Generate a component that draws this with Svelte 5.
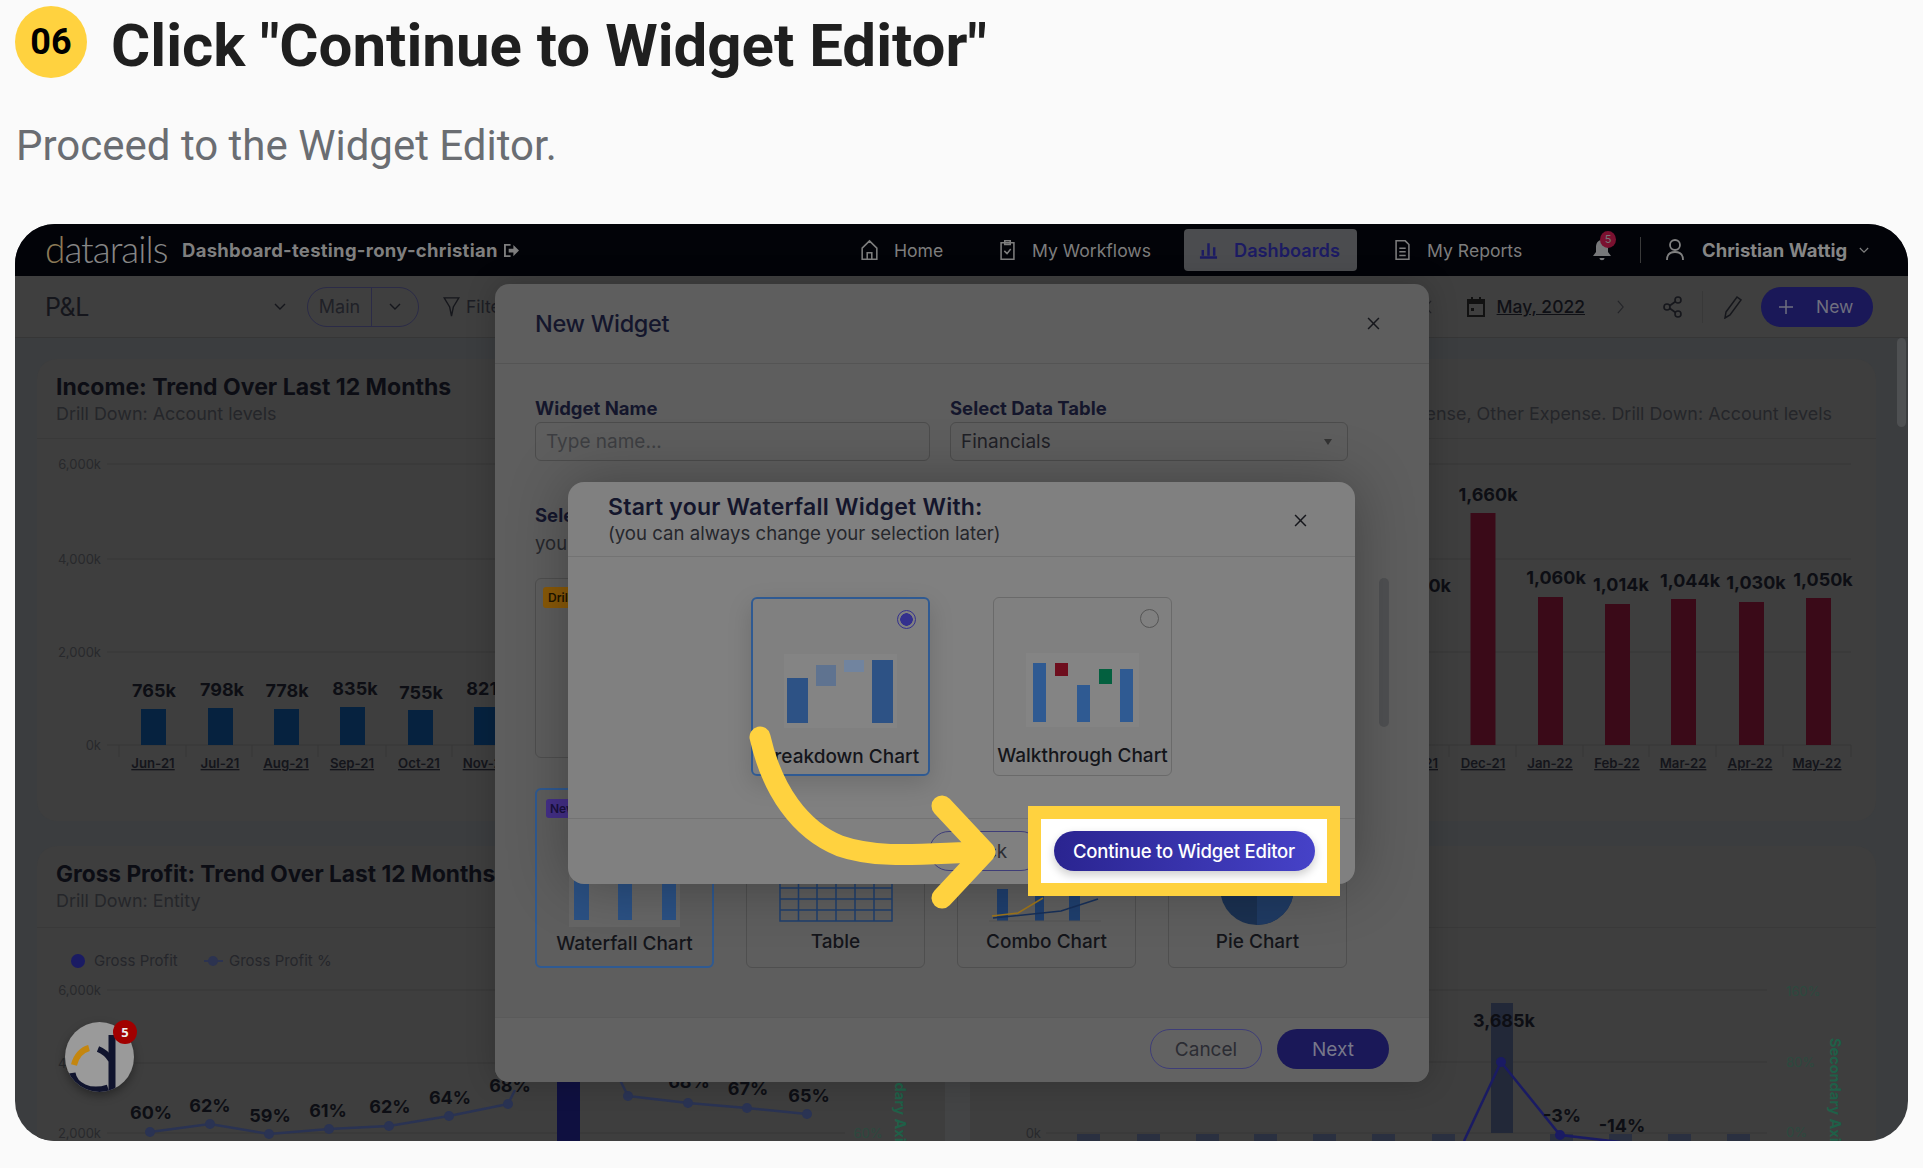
<script>
  const bars1 = [[141,709],[208,708],[274,709],[340,707],[408,710],[474,707]];
  const vals1 = [[154,690,'765k'],[222,689,'798k'],[287,690,'778k'],[355,688,'835k'],[421,692,'755k'],[487,688,'821k']];
  const months1 = [[153,'Jun-21'],[220,'Jul-21'],[286,'Aug-21'],[352,'Sep-21'],[419,'Oct-21'],[485,'Nov-21']];
  const bars2 = [[1470.5,513],[1538,597],[1605,604],[1671,599],[1739,602],[1806,598]];
  const vals2 = [[1488,495,'1,660k'],[1556,578,'1,060k'],[1621,585,'1,014k'],[1690,581,'1,044k'],[1756,583,'1,030k'],[1823,580,'1,050k']];
  const months2 = [[1483,'Dec-21'],[1550,'Jan-22'],[1617,'Feb-22'],[1683,'Mar-22'],[1750,'Apr-22'],[1817,'May-22']];
  const ticks = [119,186,252,318,386,452,1449,1516,1583,1649,1716,1783,1851];
  const pts1 = [[150,1132],[210,1124],[269,1134],[329,1129],[389,1126],[449,1116],[508,1104]];
  const pts2 = [[628,1096],[688,1103],[747,1108],[807,1114]];
  const pct1 = [[151,1113,'60%'],[210,1106,'62%'],[270,1116,'59%'],[328,1111,'61%'],[390,1107,'62%'],[450,1098,'64%'],[510,1086,'68%'],[689,1082,'68%'],[748,1089,'67%'],[809,1096,'65%']];
  const lowBars = [1077,1137,1196,1254,1313,1372,1432,1550,1609,1668,1727];
  const line = (p) => p.map((q) => q.join(',')).join(' ');
</script>

<div class="page">
  <header class="step">
    <span class="num">06</span>
    <h1>Click "Continue to Widget Editor"</h1>
  </header>
  <p class="lead">Proceed to the Widget Editor.</p>

  <section class="shot">
    <div class="topbar">
      <span class="logo"><span class="logo-d">d</span>atarails</span>
      <span class="wsname">Dashboard-testing-rony-christian</span>
      <svg class="wsicon" viewBox="0 0 18 16"><path d="M8 2H2v12h6" fill="none" stroke="#7d7d7d" stroke-width="2"/><path d="M6 6h5V2l6 6-6 6v-4H6z" fill="#7d7d7d"/></svg>
      <nav class="nav">
        <a class="navitem home">
          <svg viewBox="0 0 20 24" class="ic"><path d="M2 10l8-8 8 8v12H2zM7.500 22v-7h5v7" fill="none" stroke="#7d7d7d" stroke-width="1.700"/></svg>Home
        </a>
        <a class="navitem flows">
          <svg viewBox="0 0 20 24" class="ic"><path d="M3 4h14v18H3zM7 2h6v4H7zM6.500 13l3 3 4-5" fill="none" stroke="#7d7d7d" stroke-width="1.700"/></svg>My Workflows
        </a>
        <a class="navitem active">
          <svg viewBox="0 0 20 20" class="ic small"><path d="M1 18h18M4 10v6M10 3v13M16 7v9" fill="none" stroke="#1c1b63" stroke-width="2.600"/></svg>Dashboards
        </a>
        <a class="navitem reports">
          <svg viewBox="0 0 20 24" class="ic"><path d="M3 2h10l4 4v16H3zM6.500 10h7M6.500 14h7M6.500 18h7" fill="none" stroke="#7d7d7d" stroke-width="1.700"/></svg>My Reports
        </a>
      </nav>
      <span class="bell">
        <svg viewBox="0 0 20 22"><path d="M10 1c4 0 6 3 6 7v5l3 4H1l3-4V8c0-4 2-7 6-7zM7.500 19h5c0 3-5 3-5 0z" fill="#77787a"/></svg>
        <b>5</b>
      </span>
      <i class="vr"></i>
      <svg class="user" viewBox="0 0 20 24"><circle cx="10" cy="7" r="5" fill="none" stroke="#808080" stroke-width="1.800"/><path d="M2 22c0-6 3-8 8-8s8 2 8 8" fill="none" stroke="#808080" stroke-width="1.800"/></svg>
      <span class="uname">Christian Wattig</span>
      <svg class="chev-u" viewBox="0 0 12 8"><path d="M1 1l5 5 5-5" fill="none" stroke="#808080" stroke-width="1.400"/></svg>
    </div>

    <div class="toolbar">
      <span class="pl">P&amp;L</span>
      <svg class="chev pl-chev" viewBox="0 0 12 8"><path d="M1 1l5 5 5-5" fill="none" stroke="#15161c" stroke-width="1.400"/></svg>
      <span class="mainpill"><span>Main</span><i><svg class="chev" viewBox="0 0 12 8"><path d="M1 1l5 5 5-5" fill="none" stroke="#15161c" stroke-width="1.400"/></svg></i></span>
      <svg class="filter" viewBox="0 0 18 24"><path d="M1 2h16L11 12l-2 10-2-10z" fill="none" stroke="#16171c" stroke-width="1.500"/></svg>
      <span class="filt">Filters</span>
      <span class="spring"></span>
      <svg class="prev" viewBox="0 0 10 16"><path d="M8 1L2 8l6 7" fill="none" stroke="#232428" stroke-width="1.300"/></svg>
      <svg class="cal" viewBox="0 0 20 22"><path d="M2 4h16v16H2zM6 1v5M14 1v5" fill="none" stroke="#111" stroke-width="2"/><path d="M2 4h16v4H2z" fill="#111"/><rect x="5" y="12" width="3" height="3" fill="#111"/></svg>
      <span class="date">May, 2022</span>
      <svg class="next" viewBox="0 0 10 16"><path d="M2 1l6 7-6 7" fill="none" stroke="#232428" stroke-width="1.300"/></svg>
      <svg class="share" viewBox="0 0 20 22"><g fill="none" stroke="#16171c" stroke-width="1.600"><circle cx="15" cy="4" r="3"/><circle cx="15" cy="18" r="3"/><circle cx="4" cy="11" r="3"/><path d="M7 9.500l5.500-4M7 12.500l5.500 4"/></g></svg>
      <i class="vr dark"></i>
      <svg class="pencil" viewBox="0 0 20 24"><path d="M3 17L14 2l4 3L7 20l-5 3z" fill="none" stroke="#16171c" stroke-width="1.500"/></svg>
      <span class="newbtn"><svg viewBox="0 0 16 16"><path d="M8 1v14M1 8h14" stroke="#6f6f7f" stroke-width="1.500"/></svg><span>New</span></span>
    </div>

    <div class="cards">
      <article class="card first">
        <div class="card-head">
          <div>
            <h2>Income: Trend Over Last 12 Months</h2>
            <p>Drill Down: Account levels</p>
          </div>
          <p class="rightsub">Expense, Other Expense. Drill Down: Account levels</p>
        </div>
        <svg class="chart c1" viewBox="37 439 1839 382">
          {#each [[464,'6,000k'],[559,'4,000k'],[652,'2,000k'],[745,'0k']] as g}
            <line x1="107" x2="1851" y1={g[0]} y2={g[0]} class="gl"/>
            <text x="101" y={g[0]+5} text-anchor="end" class="ylab">{g[1]}</text>
          {/each}
          {#each ticks as t}<line x1={t} x2={t} y1="745" y2="757" class="gl"/>{/each}
          {#each bars1 as b}<rect x={b[0]} y={b[1]} width="25" height={745-b[1]} fill="#06223f"/>{/each}
          {#each vals1 as v}<text x={v[0]} y={v[1]+7} text-anchor="middle" class="val">{v[2]}</text>{/each}
          {#each months1 as m}<text x={m[0]} y="768" text-anchor="middle" class="mon">{m[1]}</text>{/each}
          <rect x="1404" y="560" width="25" height="185" fill="#3a0a18"/>
          <text x="1451" y="592" text-anchor="end" class="val">1,000k</text>
          <text x="1438" y="768" text-anchor="end" class="mon">Nov-21</text>
          {#each bars2 as b}<rect x={b[0]} y={b[1]} width="25" height={745-b[1]} fill="#3a0a18"/>{/each}
          {#each vals2 as v}<text x={v[0]} y={v[1]+6} text-anchor="middle" class="val">{v[2]}</text>{/each}
          {#each months2 as m}<text x={m[0]} y="768" text-anchor="middle" class="mon">{m[1]}</text>{/each}
        </svg>
      </article>

      <article class="card second">
        <div class="card-head">
          <div>
            <h2>Gross Profit: Trend Over Last 12 Months</h2>
            <p>Drill Down: Entity</p>
          </div>
        </div>
        <svg class="chart c2" viewBox="37 928 1839 213">
          <circle cx="78" cy="961" r="7" fill="#1a1b63"/>
          <text x="94" y="966" class="leg">Gross Profit</text>
          <line x1="204" x2="223" y1="961" y2="961" stroke="#2c3350" stroke-width="2"/>
          <circle cx="213" cy="961" r="5" fill="#2c3350"/>
          <text x="229" y="966" class="leg">Gross Profit %</text>
          {#each [[990,'6,000k'],[1063,'4,000k'],[1133,'2,000k']] as g}
            <line x1="107" x2="845" y1={g[0]} y2={g[0]} class="gl"/>
            <text x="101" y={g[0]+5} text-anchor="end" class="ylab">{g[1]}</text>
          {/each}
          <rect x="945" y="928" width="25" height="213" fill="#434445"/>
          <rect x="557" y="1060" width="23" height="90" fill="#0f1040"/>
          <polyline points={line(pts1)} class="pl1"/>
          <polyline points={line(pts2)} class="pl1"/>
          <polyline points="508,1104 515,1090" class="pl1"/>
          <polyline points="628,1096 620,1080" class="pl1"/>
          {#each [...pts1, ...pts2] as p}<circle cx={p[0]} cy={p[1]} r="5" fill="#2a3353"/>{/each}
          {#each pct1 as v}<text x={v[0]} y={v[1]+6} text-anchor="middle" class="val">{v[2]}</text>{/each}
          <text x="868" y="1138" class="green" text-anchor="middle">60%</text>
          <text x="0" y="0" class="axis" transform="translate(895 1038) rotate(90)">Secondary Axis</text>

          <line x1="1046" x2="1767" y1="1133" y2="1133" class="gl"/>
          <line x1="1046" x2="1767" y1="990" y2="990" class="gl"/>
          <line x1="1046" x2="1767" y1="1062" y2="1062" class="gl"/>
          <text x="1041" y="1138" text-anchor="end" class="ylab">0k</text>
          {#each lowBars as x}<rect x={x} y="1134" width="23" height="7" fill="#2a3040"/>{/each}
          <rect x="1491" y="1003" width="22" height="130" fill="#222838"/>
          <polyline points="1464,1141 1501,1062 1560,1135 1620,1142" fill="none" stroke="#1a1b63" stroke-width="2.500"/>
          <circle cx="1501" cy="1062" r="5" fill="#1a1b63"/>
          <circle cx="1560" cy="1135" r="5" fill="#1a1b63"/>
          <text x="1504" y="1027" text-anchor="middle" class="val">3,685k</text>
          <text x="1562" y="1122" text-anchor="middle" class="val">-3%</text>
          <text x="1622" y="1132" text-anchor="middle" class="val">-14%</text>
          <text x="1786" y="996" class="green">160%</text>
          <text x="1786" y="1067" class="green">80%</text>
          <text x="1786" y="1137" class="green">0%</text>
          <text x="0" y="0" class="axis" transform="translate(1830 1038) rotate(90)">Secondary Axis</text>
        </svg>
      </article>
    </div>
    <span class="pagebar"></span>

    <button class="avatar" aria-label="Datarails helper">
      <svg viewBox="65 1022 69 70">
        <path d="M74 1065C76 1056 82 1050 89 1048" fill="none" stroke="#c4860f" stroke-width="6"/>
        <path d="M72 1073C74 1086 90 1094 108 1088" fill="none" stroke="#10142e" stroke-width="7"/>
        <path d="M98 1049C103 1051 108 1055 111 1060" fill="none" stroke="#10142e" stroke-width="6"/>
        <path d="M112 1035v57" stroke="#10142e" stroke-width="7"/>
      </svg>
      <b>5</b>
    </button>

    <div class="modal">
      <div class="m-head"><h3>New Widget</h3><svg class="x" viewBox="0 0 12 12"><path d="M1 1l10 10M11 1L1 11" stroke="#16171c" stroke-width="1.400"/></svg></div>
      <div class="m-body">
        <div class="fields">
          <label>Widget Name<span class="inp ph">Type name...</span></label>
          <label>Select Data Table<span class="inp">Financials<i class="caret"></i></span></label>
        </div>
        <h4>Select Widget Type</h4>
        <p class="you">you can choose one of the following</p>
        <div class="bigbox"><span class="drill">Drill</span></div>
        <div class="types">
          <div class="type on">
            <span class="newtag">New</span>
            <svg viewBox="0 0 179 142"><rect x="34" y="70" width="111" height="67" fill="#666"/><rect x="39" y="90" width="15" height="40" fill="#2b5184"/><rect x="83" y="90" width="14" height="40" fill="#2b5184"/><rect x="127" y="90" width="14" height="40" fill="#2b5184"/></svg>
            <span class="lab">Waterfall Chart</span>
          </div>
          <div class="type">
            <svg viewBox="0 0 179 142"><g stroke="#1f3f6e" stroke-width="1.500" fill="none"><rect x="34" y="90" width="112" height="42"/><path d="M34 99h112M34 110h112M34 121h112M52.500 90v42M71 90v42M90 90v42M109 90v42M128 90v42"/></g></svg>
            <span class="lab">Table</span>
          </div>
          <div class="type">
            <svg viewBox="0 0 179 142"><rect x="40" y="100" width="11" height="32" fill="#1f3f6e"/><rect x="78" y="100" width="9" height="32" fill="#1f3f6e"/><rect x="112" y="100" width="11" height="32" fill="#1f3f6e"/><path d="M35 127l26-3 25-15" fill="none" stroke="#a0761a" stroke-width="1.500"/><path d="M36 129l68-7 37-12" fill="none" stroke="#17305a" stroke-width="1.500"/><path d="M32 132h112" stroke="#555" stroke-width="1"/></svg>
            <span class="lab">Combo Chart</span>
          </div>
          <div class="type">
            <svg viewBox="0 0 179 142"><circle cx="89" cy="99" r="37" fill="#1a3050"/><path d="M89 99l37 0a37 37 0 0 1-37 37z" fill="#1f3a62"/></svg>
            <span class="lab">Pie Chart</span>
          </div>
        </div>
        <span class="m-scroll"></span>
      </div>
      <div class="m-foot">
        <span class="btn ghost">Cancel</span>
        <span class="btn solid">Next</span>
      </div>
    </div>

    <div class="dialog">
      <div class="d-head">
        <div>
          <h3>Start your Waterfall Widget With:</h3>
          <p>(you can always change your selection later)</p>
        </div>
        <svg class="x" viewBox="0 0 12 12"><path d="M1 1l10 10M11 1L1 11" stroke="#16171c" stroke-width="1.400"/></svg>
      </div>
      <div class="d-body">
        <div class="opt sel">
          <span class="radio on"></span>
          <svg viewBox="0 0 179 120" class="optimg">
            <rect x="33" y="55" width="113" height="74" fill="#848484"/>
            <rect x="36" y="79" width="21" height="45" fill="#2d5285"/>
            <rect x="65" y="66" width="20" height="21" fill="#5f7390"/>
            <rect x="93" y="61" width="20" height="12" fill="#71849f"/>
            <rect x="121" y="61" width="21" height="63" fill="#2d5285"/>
          </svg>
          <span class="lab">Breakdown Chart</span>
        </div>
        <div class="opt">
          <span class="radio"></span>
          <svg viewBox="0 0 179 120" class="optimg">
            <rect x="33" y="55" width="113" height="74" fill="#848484"/>
            <rect x="40" y="65" width="13" height="59" fill="#2f5a92"/>
            <rect x="62" y="65" width="13" height="13" fill="#6e0e1e"/>
            <rect x="84" y="87" width="13" height="37" fill="#2f5a92"/>
            <rect x="106" y="71" width="13" height="15" fill="#03603f"/>
            <rect x="127" y="71" width="13" height="53" fill="#2f5a92"/>
          </svg>
          <span class="lab">Walkthrough Chart</span>
        </div>
      </div>
      <div class="d-foot"><span class="btn ghost back">Back</span></div>
    </div>

    <div class="spot"><span class="cta">Continue to Widget Editor</span></div>

    <svg class="arrow" viewBox="15 224 1893 917" aria-hidden="true">
      <path d="M760 737C772 790 800 830 840 846C880 860 930 853 984 852M942 806L985 852L942 898" fill="none" stroke="#ffd23f" stroke-width="21" stroke-linecap="round" stroke-linejoin="round"/>
    </svg>
  </section>
</div>

<style>
  :global(body) { margin: 0; background: #fafafa; }
  .page { height: 1168px; box-sizing: border-box; padding: 6px 15px 0; font-family: Inter, "Liberation Sans", sans-serif; overflow: hidden; }
  .step { display: flex; align-items: center; gap: 24px; height: 72px; }
  .num { width: 72px; height: 72px; border-radius: 50%; background: #ffd23f; color: #000; font: 700 36px Roboto, sans-serif; display: flex; align-items: center; justify-content: center; flex: none; }
  h1 { margin: 0; font: 700 60px Roboto, sans-serif; color: #1f1f1f; white-space: nowrap; position: relative; top: 3px; }
  .lead { margin: 43px 0 0 1px; font: 400 42px/50px Roboto, sans-serif; color: #6a6d72; height: 53px; }
  .shot { position: relative; margin-top: 50px; width: 1893px; height: 917px; border-radius: 40px; overflow: hidden; background: #3b3d3f; }

  .topbar { height: 52px; background: #020308; display: flex; align-items: center; padding-left: 30px; color: #7d7d7d; font-size: 17.600px; }
  .logo { font: 300 37px Lato, sans-serif; letter-spacing: -1px; color: #868686; width: 137px; position: relative; top: -2px; }
  .logo-d { color: #8c7a57; }
  .wsname { font-weight: 700; font-size: 18.500px; width: 321px; white-space: nowrap; color: #7f7f7f; letter-spacing: .27px; }
  .wsicon { width: 17px; height: 15px; }
  .nav { display: flex; align-items: center; margin-left: 340px; }
  .navitem { display: flex; align-items: center; gap: 15px; white-space: nowrap; }
  .ic { width: 19px; height: 22px; flex: none; }
  .ic.small { height: 20px; }
  .home { width: 138px; }
  .flows { width: 186px; }
  .active { width: 173px; height: 42px; background: #4b4c4f; border-radius: 4px; padding-left: 15px; box-sizing: border-box; gap: 16px; color: #1c1b63; font-weight: 600; font-size: 18.200px; }
  .reports { margin-left: 36px; width: 199px; }
  .bell { position: relative; width: 20px; height: 22px; }
  .bell svg { width: 20px; height: 22px; }
  .bell b { position: absolute; left: 8px; top: -8px; width: 16px; height: 17px; border-radius: 50%; background: #7a1130; color: #777; font: 400 11px/17px Inter, sans-serif; text-align: center; }
  .vr { width: 1px; height: 26px; background: #3a3a3a; margin-left: 28px; }
  .user { width: 20px; height: 24px; margin-left: 24px; }
  .uname { margin-left: 17px; font-weight: 700; font-size: 18.500px; white-space: nowrap; color: #868686; }
  .chev-u { width: 10px; height: 7px; margin-left: 12px; }

  .toolbar { height: 62px; background: #3f3f3f; border-bottom: 1px solid #363636; box-sizing: border-box; display: flex; align-items: center; padding-left: 30px; padding-right: 35px; color: #1c1d24; font-size: 17.500px; }
  .pl { font-size: 25px; color: #15161c; width: 229px; letter-spacing: -.5px; }
  .chev { width: 12px; height: 8px; }
  .pl-chev { flex: none; }
  .mainpill { margin-left: 21px; display: flex; align-items: center; height: 40px; width: 112px; border: 1px solid #2b2b47; border-radius: 20px; box-sizing: border-box; color: #202127; }
  .mainpill span { width: 63px; text-align: center; font-size: 18px; }
  .mainpill i { flex: 1; height: 100%; border-left: 1px solid #2b2b47; display: flex; align-items: center; justify-content: center; }
  .filter { width: 17px; height: 22px; margin-left: 24px; }
  .filt { margin-left: 6px; white-space: nowrap; }
  .spring { flex: 1; }
  .prev { width: 9px; height: 14px; margin-right: 33px; }
  .cal { width: 20px; height: 22px; }
  .date { margin-left: 11px; font-weight: 500; text-decoration: underline; color: #0f1015; white-space: nowrap; font-size: 17.500px; }
  .next { width: 9px; height: 14px; margin-left: 31px; }
  .share { width: 20px; height: 22px; margin-left: 38px; }
  .vr.dark { height: 32px; background: #383838; margin-left: 19px; }
  .pencil { width: 20px; height: 24px; margin-left: 20px; }
  .newbtn { margin-left: 18px; width: 112px; height: 40px; background: #1a1858; border-radius: 20px; display: flex; align-items: center; padding-left: 17px; box-sizing: border-box; gap: 22px; color: #6f6f7f; }
  .newbtn svg { width: 16px; height: 16px; }

  .cards { padding: 21px 32px 0 22px; display: flex; flex-direction: column; gap: 25px; }
  .card { background: #3e3e3e; border-radius: 20px; flex: none; overflow: hidden; }
  .first { height: 462px; }
  .second { height: 400px; }
  .card-head { height: 80px; box-sizing: border-box; border-bottom: 1px solid #393939; padding: 14px 44px 0 19px; display: flex; justify-content: space-between; align-items: flex-start; }
  .second .card-head { height: 82px; }
  h2 { margin: 0; font-size: 23px; font-weight: 700; line-height: 28px; color: #0c0d14; white-space: nowrap; }
  .second h2 { font-size: 22.700px; }
  .card-head p { margin: 1px 0 0; font-size: 17.900px; line-height: 24px; color: #25262a; white-space: nowrap; }
  .card-head .rightsub { margin-top: 29px; }
  .chart { display: block; width: 1839px; }
  .c1 { height: 382px; }
  .c2 { height: 213px; }
  .gl { stroke: #363636; stroke-width: 1; }
  .ylab { font-size: 13px; fill: #28292c; }
  .val { font-size: 18px; font-weight: 700; fill: #0d0e14; }
  .mon { font-size: 13.200px; font-weight: 600; fill: #14151b; text-decoration: underline; }
  .leg { font-size: 15px; fill: #25262b; }
  .pl1 { fill: none; stroke: #2a3353; stroke-width: 2.500; }
  .green { font-size: 13px; fill: #2c4a3e; }
  .axis { font-size: 14.500px; font-weight: 700; fill: #1f6048; }
  .pagebar { position: absolute; left: 1882px; top: 114px; width: 9px; height: 89px; border-radius: 5px; background: #4e5052; }

  .avatar { position: absolute; left: 50px; top: 798px; width: 69px; height: 70px; padding: 0; border: 0; border-radius: 50%; background: #9a9a9a; box-shadow: 0 4px 10px rgba(0,0,0,.35); }
  .avatar svg { display: block; width: 69px; height: 70px; border-radius: 50%; }
  .avatar b { position: absolute; right: -3px; top: -2px; width: 24px; height: 24px; border-radius: 50%; background: #a10000; color: #eee; font: 700 13px/24px "Open Sans", sans-serif; text-align: center; }

  .modal { position: absolute; left: 480px; top: 60px; width: 934px; height: 798px; background: #5e5e5e; border-radius: 14px; display: flex; flex-direction: column; box-shadow: 0 0 30px rgba(0,0,0,.2); }
  .m-head { height: 80px; box-sizing: border-box; border-bottom: 1px solid #545454; display: flex; align-items: center; justify-content: space-between; padding: 0 49px 0 40px; flex: none; }
  .m-head h3 { margin: 0; font-size: 23.500px; font-weight: 500; color: #14162c; letter-spacing: -.3px; }
  .x { width: 13px; height: 13px; }
  .m-body { position: relative; flex: 1; padding: 33px 0 0 40px; }
  .fields { display: flex; gap: 20px; }
  .fields label { display: flex; flex-direction: column; gap: 3px; font-size: 18.500px; font-weight: 700; color: #14162c; line-height: 22px; }
  .fields label:first-child .inp { width: 395px; }
  .fields label:last-child .inp { width: 398px; }
  .inp { position: relative; display: flex; align-items: center; box-sizing: border-box; height: 39px; border: 1px solid #4c4c4c; border-radius: 6px; padding-left: 10px; font-size: 19px; font-weight: 400; color: #1f2026; }
  .ph { color: #3d3e42; }
  .caret { position: absolute; right: 15px; top: 16px; border: 4px solid transparent; border-top: 6px solid #333; border-bottom: 0; }
  h4 { margin: 43px 0 0; font-size: 18.500px; line-height: 22px; font-weight: 700; color: #14162c; white-space: nowrap; }
  .you { margin: 6px 0 0; font-size: 18.500px; line-height: 22px; color: #26272c; white-space: nowrap; }
  .bigbox { position: relative; margin-top: 24px; width: 813px; height: 180px; border: 1px solid #4f4f4f; border-radius: 6px; box-sizing: border-box; }
  .drill { position: absolute; left: 7px; top: 8px; background: #8a5a08; border-radius: 3px; padding: 3px 5px; font-size: 12px; font-weight: 600; color: #201500; }
  .types { display: flex; gap: 32px; margin-top: 30px; }
  .type { position: relative; width: 179px; height: 180px; box-sizing: border-box; border: 1px solid #4f4f4f; border-radius: 6px; display: flex; flex-direction: column; align-items: center; }
  .type svg { width: 179px; height: 142px; flex: none; }
  .type.on { border: 2px solid #2f5a92; }
  .newtag { position: absolute; left: 9px; top: 9px; background: #45308a; color: #1a1040; border-radius: 3px; padding: 2px 4px; font-size: 12px; font-weight: 600; }
  .lab { font-size: 19px; font-weight: 500; color: #14151a; white-space: nowrap; margin-top: 26px; }
  .type .lab { margin-top: -1px; }
  .type.on .lab { margin-top: 0; }
  .m-scroll { position: absolute; left: 884px; top: 214px; width: 10px; height: 149px; border-radius: 5px; background: #4f5052; }
  .m-foot { height: 65px; flex: none; box-sizing: border-box; border-top: 1px solid #5a5a5a; background: #626262; border-radius: 0 0 14px 14px; display: flex; justify-content: flex-end; align-items: flex-start; gap: 15px; padding: 11px 40px 0 0; }
  .btn { width: 112px; height: 40px; border-radius: 20px; box-sizing: border-box; display: flex; align-items: center; justify-content: center; font-size: 19px; }
  .ghost { border: 1px solid #3e3d78; color: #2b2c33; }
  .solid { background: #1a1858; color: #77778a; }

  .dialog { position: absolute; left: 553px; top: 258px; width: 787px; height: 402px; background: #808080; border-radius: 16px; display: flex; flex-direction: column; box-shadow: 0 0 60px rgba(0,0,0,.3); }
  .d-head { height: 75px; flex: none; box-sizing: border-box; border-bottom: 1px solid #737373; display: flex; justify-content: space-between; align-items: center; padding: 0 48px 0 40px; }
  .d-head .x { position: relative; top: 1px; }
  .d-head h3 { margin: 0; font-size: 23px; line-height: 28px; font-weight: 600; color: #14162c; letter-spacing: .24px; white-space: nowrap; }
  .d-head p { margin: 0; font-size: 18.600px; line-height: 25px; color: #26272c; white-space: nowrap; }
  .d-body { flex: 1; display: flex; gap: 63px; padding: 40px 0 0 183px; align-items: flex-start; }
  .opt { position: relative; width: 179px; height: 179px; box-sizing: border-box; border: 1px solid #6a6a6a; border-radius: 6px; display: flex; flex-direction: column; align-items: center; }
  .opt.sel { border: 2px solid #2f5a92; box-shadow: 0 8px 24px rgba(0,0,0,.15); }
  .optimg { width: 179px; height: 120px; flex: none; overflow: visible; }
  .radio { position: absolute; right: 12px; top: 11px; width: 19px; height: 19px; box-sizing: border-box; border-radius: 50%; border: 1px solid #555; }
  .radio.on { border-color: #34308e; background: radial-gradient(circle, #34308e 0 6px, transparent 6.500px); }
  .d-foot { height: 66px; flex: none; box-sizing: border-box; border-top: 1px solid #737373; padding: 12px 0 0 361px; }
  .back { width: 112px; }

  .spot { position: absolute; left: 1013px; top: 582px; width: 312px; height: 90px; box-sizing: border-box; border: 13px solid #ffd23f; background: #fff; display: flex; align-items: center; justify-content: center; }
  .cta { width: 261px; height: 40px; border-radius: 20px; background: linear-gradient(90deg, #2a2490, #4642c8); color: #fff; font-size: 18.500px; font-weight: 500; display: flex; align-items: center; justify-content: center; white-space: nowrap; box-shadow: 0 4px 10px rgba(0,0,0,.2); letter-spacing: -.2px; }
  .arrow { position: absolute; left: 0; top: 0; width: 1893px; height: 917px; pointer-events: none; }
</style>
